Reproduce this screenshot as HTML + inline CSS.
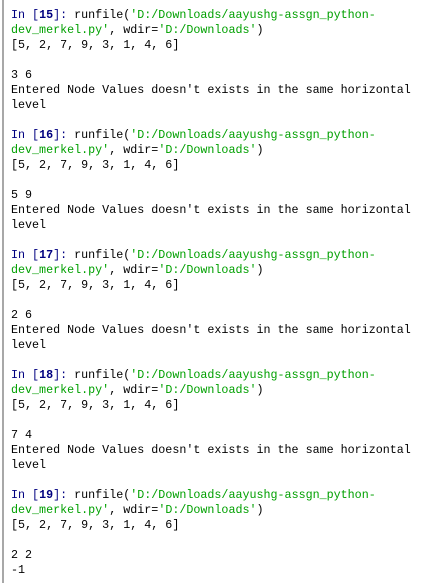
<!DOCTYPE html>
<html><head><meta charset="utf-8"><style>
html,body{margin:0;padding:0;background:#fff;width:431px;height:583px;overflow:hidden}
.b{position:absolute;left:2px;top:0;width:2px;height:583px;background:#a8a8a8}
pre{position:absolute;left:11px;top:8px;margin:0;font-family:"Liberation Mono",monospace;font-size:11.7px;line-height:15px;color:#000}
.p{color:#000080}.p b{font-weight:bold}
.s{color:#00a000}
</style></head><body><div class="b"></div>
<pre><span class="p">In [<b>15</b>]:</span> runfile(<span class="s">'D:/Downloads/aayushg-assgn_python-
dev_merkel.py'</span>, wdir=<span class="s">'D:/Downloads'</span>)
[5, 2, 7, 9, 3, 1, 4, 6]

3 6
Entered Node Values doesn't exists in the same horizontal
level

<span class="p">In [<b>16</b>]:</span> runfile(<span class="s">'D:/Downloads/aayushg-assgn_python-
dev_merkel.py'</span>, wdir=<span class="s">'D:/Downloads'</span>)
[5, 2, 7, 9, 3, 1, 4, 6]

5 9
Entered Node Values doesn't exists in the same horizontal
level

<span class="p">In [<b>17</b>]:</span> runfile(<span class="s">'D:/Downloads/aayushg-assgn_python-
dev_merkel.py'</span>, wdir=<span class="s">'D:/Downloads'</span>)
[5, 2, 7, 9, 3, 1, 4, 6]

2 6
Entered Node Values doesn't exists in the same horizontal
level

<span class="p">In [<b>18</b>]:</span> runfile(<span class="s">'D:/Downloads/aayushg-assgn_python-
dev_merkel.py'</span>, wdir=<span class="s">'D:/Downloads'</span>)
[5, 2, 7, 9, 3, 1, 4, 6]

7 4
Entered Node Values doesn't exists in the same horizontal
level

<span class="p">In [<b>19</b>]:</span> runfile(<span class="s">'D:/Downloads/aayushg-assgn_python-
dev_merkel.py'</span>, wdir=<span class="s">'D:/Downloads'</span>)
[5, 2, 7, 9, 3, 1, 4, 6]

2 2
-1</pre>
</body></html>
